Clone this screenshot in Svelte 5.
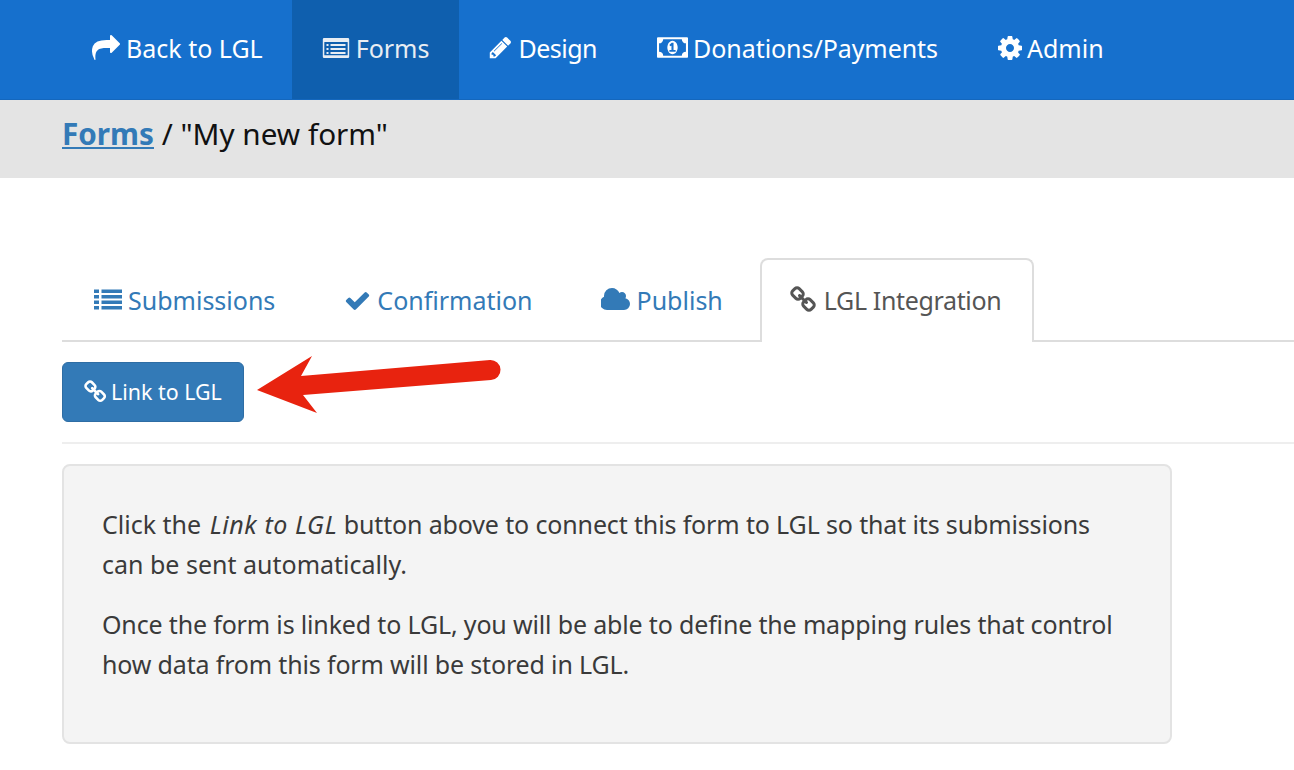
<script>
  const cog = "M1152 896q0-106-75-181t-181-75-181 75-75 181 75 181 181 75 181-75 75-181zm512-109v222q0 12-8 23t-20 13l-185 28q-19 54-39 91 35 50 107 138 10 12 10 25t-9 23q-27 37-99 108t-94 71q-12 0-26-9l-138-108q-44 23-91 38-16 136-29 186-7 28-36 28h-222q-14 0-24.5-8.5t-11.5-21.5l-28-184q-49-16-90-37l-141 107q-10 9-25 9-14 0-25-11-126-114-165-168-7-10-7-23 0-12 8-23 15-21 51-66.5t54-70.5q-27-50-41-99l-183-27q-13-2-21-12.5t-8-23.5v-222q0-12 8-23t19-13l186-28q14-46 39-92-40-57-107-138-10-12-10-24 0-10 9-23 26-36 98.5-107.5t94.5-71.5q13 0 26 10l138 107q44-23 91-38 16-136 29-186 7-28 36-28h222q14 0 24.5 8.5t11.5 21.5l28 184q49 16 90 37l142-107q9-9 24-9 13 0 25 10 129 119 165 170 7 8 7 22 0 12-8 23-15 21-51 66.5t-54 70.5q26 50 41 98l183 28q13 2 21 12.5t8 23.5z";
  const link = "M1456 1216q0-40-28-68l-208-208q-28-28-68-28-42 0-72 32 3 3 19 18.5t21.5 21.5 15 19 13 25.5 3.5 27.5q0 40-28 68t-68 28q-15 0-27.5-3.5t-25.5-13-19-15-21.5-21.5-18.5-19q-33 31-33 73 0 40 28 68l206 207q27 27 68 27 40 0 68-26l147-146q28-28 28-67zm-703-705q0-40-28-68l-206-207q-28-28-68-28-39 0-68 27l-147 146q-28 28-28 67 0 40 28 68l208 208q27 27 68 27 42 0 72-31-3-3-19-18.5t-21.5-21.5-15-19-13-25.5-3.5-27.5q0-40 28-68t68-28q15 0 27.5 3.5t25.5 13 19 15 21.5 21.5 18.5 19q33-31 33-73zm895 705q0 120-85 203l-147 146q-83 83-203 83-121 0-204-85l-206-207q-83-83-83-203 0-123 88-209l-88-88q-86 88-208 88-120 0-204-84l-208-208q-84-84-84-204t85-203l147-146q83-83 203-83 121 0 204 85l206 207q83 83 83 203 0 123-88 209l88 88q86-88 208-88 120 0 204 84l208 208q84 84 84 204z";
  const share = "M1792 640q0 26-19 45l-512 512q-19 19-45 19t-45-19-19-45v-256h-224q-98 0-175.5 6t-154 21.5-133 42.5-105.5 69.5-80 101-48.5 138.5-17.5 181q0 55 5 123 0 6 2.5 23.5t2.5 26.5q0 15-8.5 25t-23.5 10q-16 0-28-17-7-9-13-22t-13.5-30-10.5-24q-127-285-127-451 0-199 53-333 162-403 875-403h224v-256q0-26 19-45t45-19 45 19l512 512q19 19 19 45z";
  const pencil = "M491 1536l91-91-235-235-91 91v107h128v128h107zm523-928q0-22-22-22-10 0-17 7l-542 542q-7 7-7 17 0 22 22 22 10 0 17-7l542-542q7-7 7-17zm-54-192l416 416-832 832h-416v-416zm683 96q0 53-37 90l-166 166-416-416 166-165q36-38 90-38 53 0 91 38l235 234q37 39 37 91z";
  const check = "M1671 566q0 40-28 68l-724 724-136 136q-28 28-68 28t-68-28l-136-136-362-362q-28-28-28-68t28-68l136-136q28-28 68-28t68 28l294 295 656-657q28-28 68-28t68 28l136 136q28 28 28 68z";
  const cloud = "M1856 1152q0 159-112.5 271.5t-271.5 112.5h-1088q-185 0-316.5-131.5t-131.5-316.5q0-132 71-241.5t187-163.5q-2-28-2-43 0-212 150-362t362-150q158 0 286.5 88t187.5 230q70-62 166-62 106 0 181 75t75 181q0 75-41 138 129 30 213 134.5t84 239.5z";
  const listAlt = "M130 256h1532q78 0 78 78v1124q0 78-78 78H130q-78 0-78-78V334q0-78 78-78zm38 256q-20 0-20 20v804q0 20 20 20h1456q20 0 20-20V532q0-20-20-20zm120 128h128v128H288zm256 0h960v128H544zM288 896h128v128H288zm256 0h960v128H544zM288 1152h128v128H288zm256 0h960v128H544z";
  const list = "M0 224h320v224H0zM480 224h1312v224H480zM0 576h320v224H0zM480 576h1312v224H480zM0 928h320v224H0zM480 928h1312v224H480zM0 1280h320v224H0zM480 1280h1312v224H480z";
  const money = "M768 1152h384v-96h-128v-448h-114l-148 137 77 80q42-37 55-57h2v288h-128v96zm512-256q0 70-21 142t-59.5 134-101.5 101-138 39-138-39-101.5-101-59.5-134-21-142 21-142 59.5-134 101.5-101 138-39 138 39 101.5 101 59.5 134 21 142zm512 256v-512q-106 0-181-75t-75-181h-1152q0 106-75 181t-181 75v512q106 0 181 75t75 181h1152q0-106 75-181t181-75zm128-832v1152q0 26-19 45t-45 19h-1792q-26 0-45-19t-19-45v-1152q0-26 19-45t45-19h1792q26 0 45 19t19 45z";
</script>

<div class="page">
  <nav class="topnav">
    <a class="navitem first" href="#back"><svg class="i back" viewBox="0 0 1792 1792"><path d={share} /></svg>Back to LGL</a>
    <a class="navitem active" href="#forms"><svg class="i alt" viewBox="0 0 1792 1792"><path fill-rule="evenodd" d={listAlt} /></svg>Forms</a>
    <a class="navitem tight" href="#design"><svg class="i pen" viewBox="0 0 1792 1792"><path d={pencil} /></svg>Design</a>
    <a class="navitem pay" href="#pay"><svg class="i money" viewBox="0 256 1920 1280"><path d={money} /></svg>Donations/Payments</a>
    <a class="navitem" href="#admin"><svg class="i gear" viewBox="128 128 1536 1536"><path d={cog} /></svg>Admin</a>
  </nav>

  <div class="crumb"><a href="#forms">Forms</a> / "My new form"</div>

  <main class="content">
    <ul class="tabs">
      <li><a href="#s"><svg class="t list" viewBox="0 0 1792 1792"><path d={list} /></svg>Submissions</a></li>
      <li><a href="#c"><svg class="t chk" viewBox="0 0 1792 1792"><path d={check} /></svg>Confirmation</a></li>
      <li><a href="#p"><svg class="t cloud" viewBox="0 0 1920 1792"><path d={cloud} /></svg>Publish</a></li>
      <li class="on"><a href="#l"><svg class="t lnk" viewBox="0 0 1792 1792"><path d={link} /></svg>LGL Integration</a></li>
    </ul>

    <div class="toolbar">
      <button class="btn" type="button"><svg class="b" viewBox="0 0 1792 1792"><path d={link} /></svg>Link to LGL</button>
      <svg class="arrow" viewBox="0 0 244 60" aria-hidden="true">
        <path d="M0 35 L55 1 L44 21 L233 5 A10 10 0 0 1 234 25 L46 40 L60 58 Z" fill="#e8230f" />
      </svg>
    </div>

    <div class="well">
      <p>Click the <em>Link to LGL</em> <span class="squeeze">button above to connect this form to LGL so that its submissions</span> can be sent automatically.</p>
      <p class="second">Once the form is linked to LGL, you will be able to define the mapping rules that control how data from this form will be stored in LGL.</p>
    </div>
  </main>
</div>

<style>
  :global(body) { margin: 0; background: #fff; overflow: hidden; }
  .page { font-family: "Noto Sans", sans-serif; font-size: 25px; color: #333; height: 770px; overflow: hidden; }
  a { text-decoration: none; }
  svg { fill: currentColor; display: inline-block; flex: none; }

  .topnav { display: flex; height: 99px; padding-left: 61px; background: #1670cd; border-bottom: 1px solid #1467bd; }
  .navitem { display: flex; align-items: center; box-sizing: border-box; padding: 0 30px 4px; color: #fff; height: 99px; }
  .navitem.first { padding-left: 31px; padding-right: 29px; }
  .navitem.active { background: #0f5fae; color: #e8edf3; }
  .navitem.tight { letter-spacing: -0.5px; padding-left: 29px; }
  .navitem.pay { letter-spacing: -0.06px; }
  .i { margin-right: 6px; }
  .back { width: 28px; height: 28px; }
  .alt { width: 28px; height: 28px; }
  .pen { width: 25px; height: 25px; margin-right: 5px; }
  .money { width: 31px; height: 21px; margin-right: 5px; }
  .gear { width: 24px; height: 24px; margin-right: 5px; }

  .crumb { height: 78px; background: #e4e4e4; padding-left: 62px; line-height: 68px; font-size: 29.7px; color: #111; box-sizing: border-box; }
  .crumb a { color: #337ab7; font-weight: 700; text-decoration: underline; }

  .content { padding: 80px 0 0 62px; }
  .tabs { display: flex; list-style: none; margin: 0; padding: 0; border-bottom: 2px solid #ddd; height: 82px; }
  .tabs li { height: 84px; box-sizing: border-box; margin-right: 5px; }
  .tabs a { display: flex; align-items: center; height: 84px; box-sizing: border-box; padding: 0 32px; color: #337ab7; }
  .tabs .on { background: #fff; border: 2px solid #ddd; border-bottom: 0; border-radius: 8px 8px 0 0; margin-left: 0; }
  .tabs .on a { color: #555; padding: 0 31px 0 29px; height: 80px; letter-spacing: -0.35px; }
  .t { margin-right: 6px; }
  .list { width: 28px; height: 28px; }
  .chk { width: 27px; height: 27px; }
  .cloud { width: 30px; height: 28px; margin-left: -1px; }
  .lnk { width: 28px; height: 28px; margin-left: -1px; }

  .toolbar { position: relative; padding: 20px 0; border-bottom: 2px solid #eee; }
  .btn { display: flex; align-items: center; width: 182px; height: 60px; box-sizing: border-box; padding: 0 0 1px 21px; background: #337ab7; border: 1px solid #2e6da4; border-radius: 6px; color: #fff; font: inherit; font-size: 21.4px; }
  .b { width: 24px; height: 24px; margin-right: 3px; }
  .arrow { position: absolute; left: 195px; top: 13px; width: 244px; height: 60px; }

  .well { width: 1110px; height: 280px; box-sizing: border-box; margin-top: 20px; padding: 38px 38px 0; background: #f4f4f4; border: 2px solid #e3e3e3; border-radius: 8px; color: #3a3a3a; }
  .well p { margin: 0 0 20px; line-height: 40px; }
  .well em { margin-left: 2px; letter-spacing: 0.6px; }
  .well .squeeze { letter-spacing: -0.14px; }
  .well .second { letter-spacing: -0.16px; }
</style>
